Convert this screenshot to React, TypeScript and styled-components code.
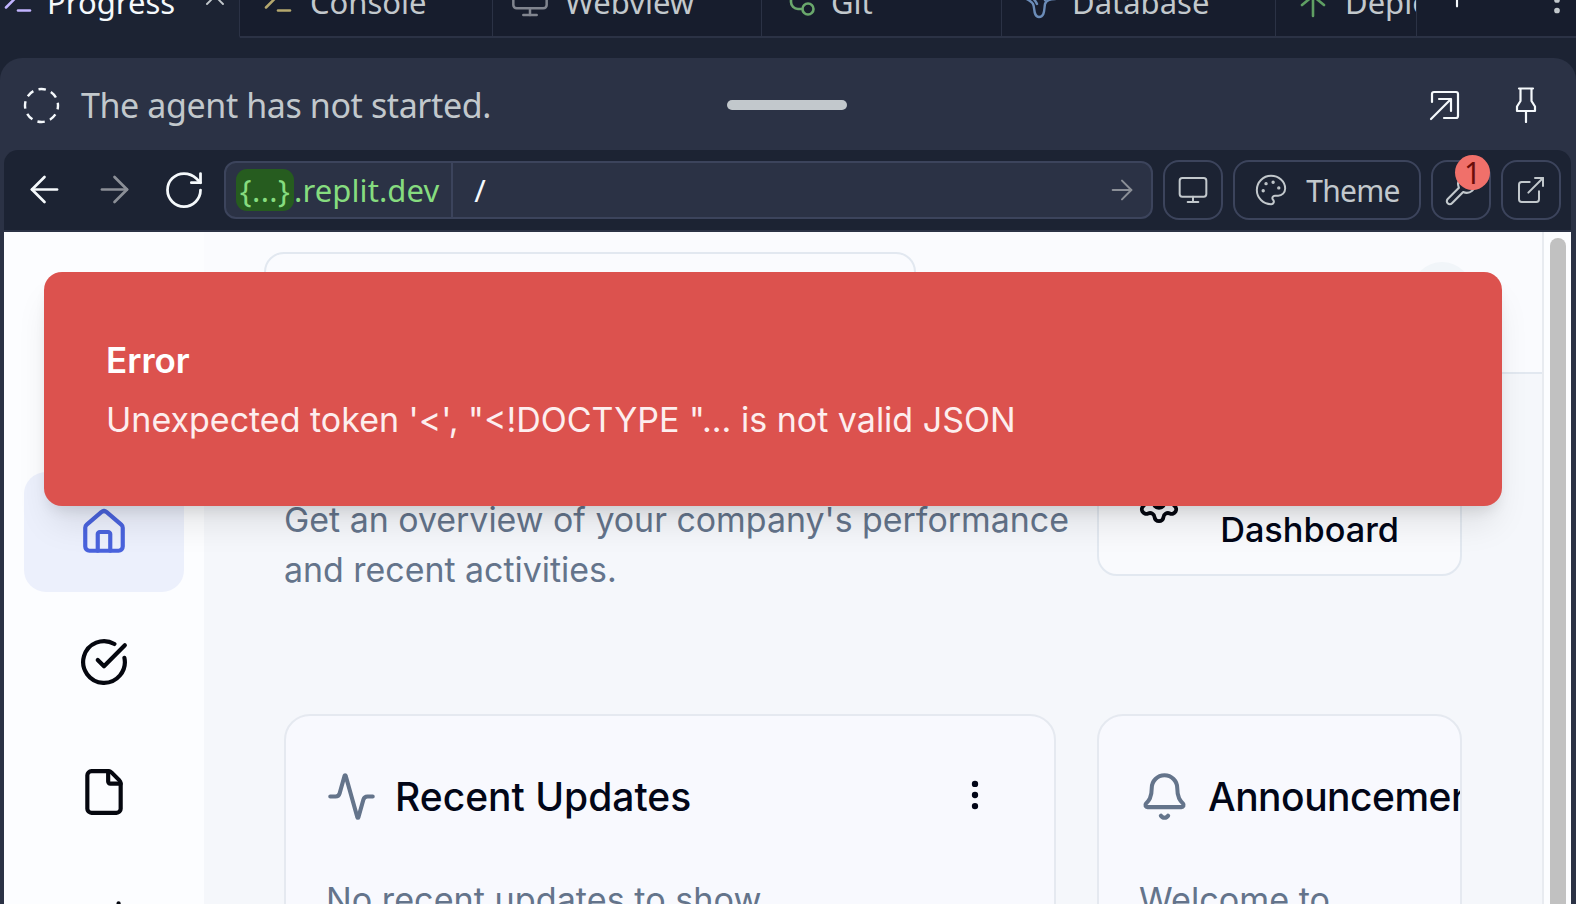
import React from "react";
import styled, { createGlobalStyle } from "styled-components";
import {
  ArrowLeft, ArrowRight, RotateCw, Monitor, Palette, Wrench, ExternalLink, Terminal, X, Plus,
  MoreVertical, House, CircleCheckBig, File, ChartNoAxesColumnIncreasing, Activity, Bell, Settings,
} from "lucide-react";

const Global = createGlobalStyle`
  html, body { margin: 0; padding: 0; overflow: hidden; background: #1c2333; }
  * { box-sizing: border-box; }
`;
const ideFont = `"Noto Sans", "Liberation Sans", sans-serif`;
const appFont = `Inter, "Liberation Sans", sans-serif`;

const Screen = styled.div`
  width: 1576px; height: 904px; overflow: hidden; display: flex; flex-direction: column;
  background: #1c2333; font-family: ${ideFont};
`;
const TabBar = styled.div`
  display: flex; height: 38px; flex: none; position: relative;
`;
const Tab = styled.div<{ $w: number; $pad: number; $gap?: number; $active?: boolean }>`
  width: ${(p) => p.$w}px; height: 38px; flex: none; display: flex; align-items: center; overflow: hidden;
  padding: 0 0 36px ${(p) => p.$pad}px; gap: ${(p) => p.$gap ?? 14}px;
  background: ${(p) => (p.$active ? "#1c2333" : "#171d2d")};
  border-right: 1px solid #2b3245;
  border-bottom: 2px solid ${(p) => (p.$active ? "#1c2333" : "#2b3245")};
  color: ${(p) => (p.$active ? "#f5f9fc" : "#c2c8cc")};
  svg { flex: none; }
`;
const TabText = styled.span`
  font-size: 31px; line-height: 36px; padding-top: 4px; white-space: nowrap;
`;
const CloseSlot = styled.span`
  margin: -9px 8px 0 auto; display: flex; color: #c2c8cc;
`;
const TabTools = styled.div`
  flex: 1; height: 38px; display: flex; align-items: center; justify-content: space-between;
  padding: 0 0 36px 24px; background: #171d2d; border-bottom: 2px solid #2b3245; color: #f5f9fc;
  svg { flex: none; }
`;
const AddTab = styled(Plus)`
  margin-top: -7px;
`;
const KebabGrey = styled(MoreVertical)`
  color: #c2c8cc; position: relative; left: -1px;
`;
const Panel = styled.div`
  flex: 1; margin-top: 20px; min-height: 0; display: flex; flex-direction: column;
  background: #2b3245; border-radius: 22px 22px 0 0; padding: 0 5px 0 4px;
`;
const AgentRow = styled.div`
  height: 92px; flex: none; display: grid; grid-template-columns: 1fr auto 1fr; align-items: center;
  margin: 0 -5px 0 -4px; padding: 2px 24px 0 22px;
`;
const AgentStatus = styled.div`
  display: flex; align-items: center; gap: 21px; padding-left: 1px; color: #c2c8cc;
`;
const AgentText = styled.span`
  font-size: 34px; line-height: 44px; letter-spacing: -0.4px; white-space: nowrap;
`;
const Handle = styled.div`
  width: 120px; height: 10px; border-radius: 5px; background: #c2c8cc;
`;
const AgentActions = styled.div`
  display: flex; justify-content: flex-end; align-items: center; gap: 54px; color: #f5f9fc; padding-right: 15px;
`;
const BrowserBar = styled.div`
  height: 80px; flex: none; background: #1c2333; border-radius: 14px 14px 0 0; margin-bottom: 2px;
  display: flex; align-items: center; padding: 0 11px 0 5px; gap: 10px;
`;
const NavGroup = styled.div`
  display: flex; margin-right: -5px;
`;
const NavButton = styled.div<{ $dim?: boolean }>`
  width: 70px; display: flex; justify-content: center; color: ${(p) => (p.$dim ? "#8b8f97" : "#f5f9fc")};
`;
const Address = styled.div`
  width: 929px; height: 58px; flex: none; display: flex; align-items: center; background: #2b3245;
  border: 2px solid #3c445c; border-radius: 12px; color: #f5f9fc;
`;
const Host = styled.div`
  height: 100%; display: flex; align-items: center; padding: 0 12px 0 10px; border-right: 2px solid #3c445c;
  color: #86dc7f; font-size: 31px; letter-spacing: 0.1px; white-space: nowrap;
`;
const HostBadge = styled.span`
  height: 42px; width: 58px; flex: none; display: flex; align-items: center; justify-content: center;
  background: #265c1f; border-radius: 11px; letter-spacing: 0.4px;
`;
const Path = styled.span`
  flex: 1; padding-left: 21px; font-size: 31px;
`;
const GoIcon = styled(ArrowRight)`
  margin-right: 13px; color: #8b8f97;
`;
const BarButton = styled.div<{ $w: number }>`
  width: ${(p) => p.$w}px; height: 60px; flex: none; display: flex; align-items: center; justify-content: center;
  gap: 18px; position: relative; border: 2px solid #3c445c; border-radius: 16px; color: #c2c8cc;
`;
const ButtonText = styled.span`
  font-size: 30px; letter-spacing: -0.7px;
`;
const Badge = styled.span`
  position: absolute; left: 22px; top: -7px; width: 35px; height: 35px; border-radius: 50%;
  background: #f0706a; color: #6b0d0a; display: flex; align-items: center; justify-content: center;
  font-size: 30px; line-height: 1;
`;
const Content = styled.div`
  flex: 1; min-height: 0; position: relative; display: flex; overflow: hidden; background: #fcfdff;
  font-family: ${appFont};
`;
const Sidebar = styled.nav`
  width: 200px; flex: none; display: flex; flex-direction: column; gap: 10px; padding: 240px 20px 0;
  background: #fcfdff;
`;
const NavItem = styled.div<{ $active?: boolean }>`
  height: 120px; flex: none; display: flex; align-items: center; justify-content: center;
  border-radius: 22px; background: ${(p) => (p.$active ? "#ecf0fc" : "transparent")};
  color: ${(p) => (p.$active ? "#4a63dd" : "#05070f")};
`;
const Main = styled.main`
  flex: 1; min-width: 0; display: flex; flex-direction: column; border-right: 2px solid #e8ebf0;
  background: #f5f7fb;
`;
const Header = styled.header`
  height: 142px; flex: none; display: flex; justify-content: space-between; overflow: hidden;
  padding: 20px 70px 0 60px; background: #fafbfe; border-bottom: 2px solid #e2e8f0;
`;
const Search = styled.div`
  width: 652px; height: 100px; border: 2px solid #e2e8f0; border-radius: 20px; background: #fafbfe;
`;
const Avatar = styled.div`
  width: 60px; height: 60px; border-radius: 50%; background: #f1f5f9; margin-top: 10px;
`;
const Body = styled.div`
  flex: 1; min-height: 0; padding: 66px 80px 0 80px; display: flex; flex-direction: column; gap: 119px;
`;
const Intro = styled.div`
  display: flex; justify-content: space-between; align-items: flex-start; height: 155px;
`;
const Subtitle = styled.p`
  margin: 0; padding-top: 55px; width: 800px; font-size: 33.9px; line-height: 50px; color: #64748b;
`;
const DashButton = styled.div`
  width: 365px; height: 136px; display: flex; align-items: flex-end; justify-content: flex-end;
  padding: 0 61px 24px 0; position: relative; border: 2px solid #e2e8f0; border-radius: 20px; background: #f9fafd;
  font-size: 34.3px; font-weight: 500; line-height: 40px; color: #020617;
`;
const DashIcon = styled(Settings)`
  position: absolute; left: 37px; bottom: 49px; color: #05070f;
`;
const Cards = styled.div`
  display: grid; grid-template-columns: 772px 365px; gap: 41px; flex: 1; min-height: 0;
`;
const Card = styled.section`
  height: 400px; overflow: hidden; background: #f8f9fe; border: 2px solid #e5e9f0; border-radius: 26px;
  padding: 53px 41px 0 40px;
`;
const CardHead = styled.div`
  display: flex; align-items: center; height: 54px; white-space: nowrap; color: #64748b;
  > svg { flex: none; }
`;
const CardTitle = styled.h3<{ $tight?: boolean }>`
  margin: 0 0 0 18px; flex: 1; font-size: 39px; font-weight: 500; color: #020617;
  letter-spacing: ${(p) => (p.$tight ? "-0.5px" : "0")};
`;
const CardMenu = styled(MoreVertical)`
  margin: 0 19px 2px 0; color: #020617;
`;
const CardText = styled.p`
  margin: 55px 0 0; font-size: 34.2px; line-height: 44px; color: #64748b; white-space: nowrap;
`;
const Scroll = styled.div`
  width: 27px; flex: none; padding: 6px 5px 0 6px; background: #fcfdff;
`;
const Thumb = styled.div`
  width: 16px; height: 100%; border-radius: 8px 8px 0 0; background: #c1c1c1;
`;
const Toast = styled.div`
  position: absolute; left: 40px; top: 40px; width: 1458px; height: 234px; padding: 2px 62px 0;
  display: flex; flex-direction: column; justify-content: center; background: #dc524e; border-radius: 18px;
  box-shadow: 0 23px 35px -7px rgba(0,0,0,.1), 0 9px 14px -5px rgba(0,0,0,.1);
`;
const ToastTitle = styled.div`
  font-size: 35px; line-height: 60px; font-weight: 600; color: #fff;
`;
const ToastText = styled.div`
  font-size: 34px; line-height: 60px; color: #fdeeee; white-space: nowrap;
`;

const Dashed = () => (
  <svg width="37" height="37" viewBox="0 0 37 37" fill="none" stroke="#f5f9fc" strokeWidth="2.4">
    <circle cx="18.5" cy="18.5" r="16.5" strokeDasharray="7.5 5.45" strokeDashoffset="3.5" />
  </svg>
);
const OpenSquare = () => (
  <svg width="32" height="32" viewBox="0 0 32 32" fill="none" stroke="#f5f9fc" strokeWidth="2.2" strokeLinecap="round" strokeLinejoin="round">
    <path d="M3 13V5a2 2 0 0 1 2-2h22a2 2 0 0 1 2 2v22a2 2 0 0 1-2 2H15" />
    <path d="M2 30 22 10M10 10h12v12" />
  </svg>
);
const PinIcon = () => (
  <svg width="22" height="36" viewBox="0 0 22 36" fill="none" stroke="#f5f9fc" strokeWidth="2.2" strokeLinecap="round" strokeLinejoin="round">
    <path d="M4 1.5h14M5.5 1.5v12.5l-3.5 5.5v4.5h18v-4.5l-3.5-5.5V1.5M11 24v11" />
  </svg>
);
const GitIcon = () => (
  <svg width="36" height="36" viewBox="0 0 36 36" fill="none" stroke="#6aa86c" strokeWidth="2.6" strokeLinecap="round">
    <circle cx="27" cy="27" r="5.5" />
    <path d="M10 3v17a7 7 0 0 0 7 7h4" />
  </svg>
);
const DbIcon = () => (
  <svg width="38" height="38" viewBox="0 0 38 38" fill="none" stroke="#6b8cb8" strokeWidth="2.4" strokeLinecap="round" strokeLinejoin="round">
    <path d="M2 14c5 4 11 5 13 9 2 3 0 13 6 13s5-8 6-13c1-3 5-5 10-5" />
    <path d="M10 12c3 4 7 6 9 11" />
    <path d="M26 12c0 3 0 4 1 7" />
  </svg>
);
const DeployIcon = () => (
  <svg width="36" height="36" viewBox="0 0 36 36" fill="none" stroke="#5f9f63" strokeWidth="2.6" strokeLinecap="round" strokeLinejoin="round">
    <path d="M18 4v30M7 16l11-12 11 12M7 23l11-9 11 9" />
  </svg>
);

export default function App() {
  return (
    <Screen>
      <Global />
      <TabBar>
        <Tab $w={240} $pad={0} $gap={11} $active>
          <Terminal size={36} color="#c1b4ff" strokeWidth={1.7} />
          <TabText>Progress</TabText>
          <CloseSlot><X size={32} strokeWidth={1.4} /></CloseSlot>
        </Tab>
        <Tab $w={253} $pad={20}>
          <Terminal size={36} color="#b5a86e" strokeWidth={1.7} />
          <TabText>Console</TabText>
        </Tab>
        <Tab $w={269} $pad={17} $gap={15}>
          <Monitor size={40} color="#81858f" strokeWidth={1.5} />
          <TabText>Webview</TabText>
        </Tab>
        <Tab $w={240} $pad={19}>
          <GitIcon />
          <TabText>Git</TabText>
        </Tab>
        <Tab $w={274} $pad={16} $gap={16}>
          <DbIcon />
          <TabText>Database</TabText>
        </Tab>
        <Tab $w={141} $pad={19}>
          <DeployIcon />
          <TabText>Deployments</TabText>
        </Tab>
        <TabTools>
          <AddTab size={32} strokeWidth={1.6} />
          <KebabGrey size={36} strokeWidth={1.8} />
        </TabTools>
      </TabBar>
      <Panel>
        <AgentRow>
          <AgentStatus>
            <Dashed />
            <AgentText>The agent has not started.</AgentText>
          </AgentStatus>
          <Handle />
          <AgentActions>
            <OpenSquare />
            <PinIcon />
          </AgentActions>
        </AgentRow>
        <BrowserBar>
          <NavGroup>
            <NavButton><ArrowLeft size={43} strokeWidth={1.5} /></NavButton>
            <NavButton $dim><ArrowRight size={43} strokeWidth={1.5} /></NavButton>
            <NavButton><RotateCw size={44} strokeWidth={1.5} /></NavButton>
          </NavGroup>
          <Address>
            <Host><HostBadge>{"{...}"}</HostBadge>.replit.dev</Host>
            <Path>/</Path>
            <GoIcon size={32} strokeWidth={1.5} />
          </Address>
          <BarButton $w={60}><Monitor size={32} strokeWidth={1.5} /></BarButton>
          <BarButton $w={188}><Palette size={34} strokeWidth={1.4} /><ButtonText>Theme</ButtonText></BarButton>
          <BarButton $w={60}><Wrench size={34} strokeWidth={1.5} /><Badge>1</Badge></BarButton>
          <BarButton $w={60}><ExternalLink size={32} strokeWidth={1.5} /></BarButton>
        </BrowserBar>
        <Content>
          <Sidebar>
            <NavItem $active><House size={50} strokeWidth={2} /></NavItem>
            <NavItem><CircleCheckBig size={50} strokeWidth={2} /></NavItem>
            <NavItem><File size={50} strokeWidth={2} /></NavItem>
            <NavItem><ChartNoAxesColumnIncreasing size={50} strokeWidth={2} /></NavItem>
          </Sidebar>
          <Main>
            <Header>
              <Search />
              <Avatar />
            </Header>
            <Body>
              <Intro>
                <Subtitle>Get an overview of your company's performance and recent activities.</Subtitle>
                <DashButton>
                  <DashIcon size={46} strokeWidth={2} />
                  Dashboard
                </DashButton>
              </Intro>
              <Cards>
                <Card>
                  <CardHead>
                    <Activity size={51} strokeWidth={1.9} />
                    <CardTitle>Recent Updates</CardTitle>
                    <CardMenu size={38} strokeWidth={2} />
                  </CardHead>
                  <CardText>No recent updates to show</CardText>
                </Card>
                <Card>
                  <CardHead>
                    <Bell size={51} strokeWidth={1.9} />
                    <CardTitle $tight>Announcements</CardTitle>
                  </CardHead>
                  <CardText>Welcome to</CardText>
                </Card>
              </Cards>
            </Body>
          </Main>
          <Scroll><Thumb /></Scroll>
          <Toast>
            <ToastTitle>Error</ToastTitle>
            <ToastText>Unexpected token '&lt;', "&lt;!DOCTYPE "... is not valid JSON</ToastText>
          </Toast>
        </Content>
      </Panel>
    </Screen>
  );
}
